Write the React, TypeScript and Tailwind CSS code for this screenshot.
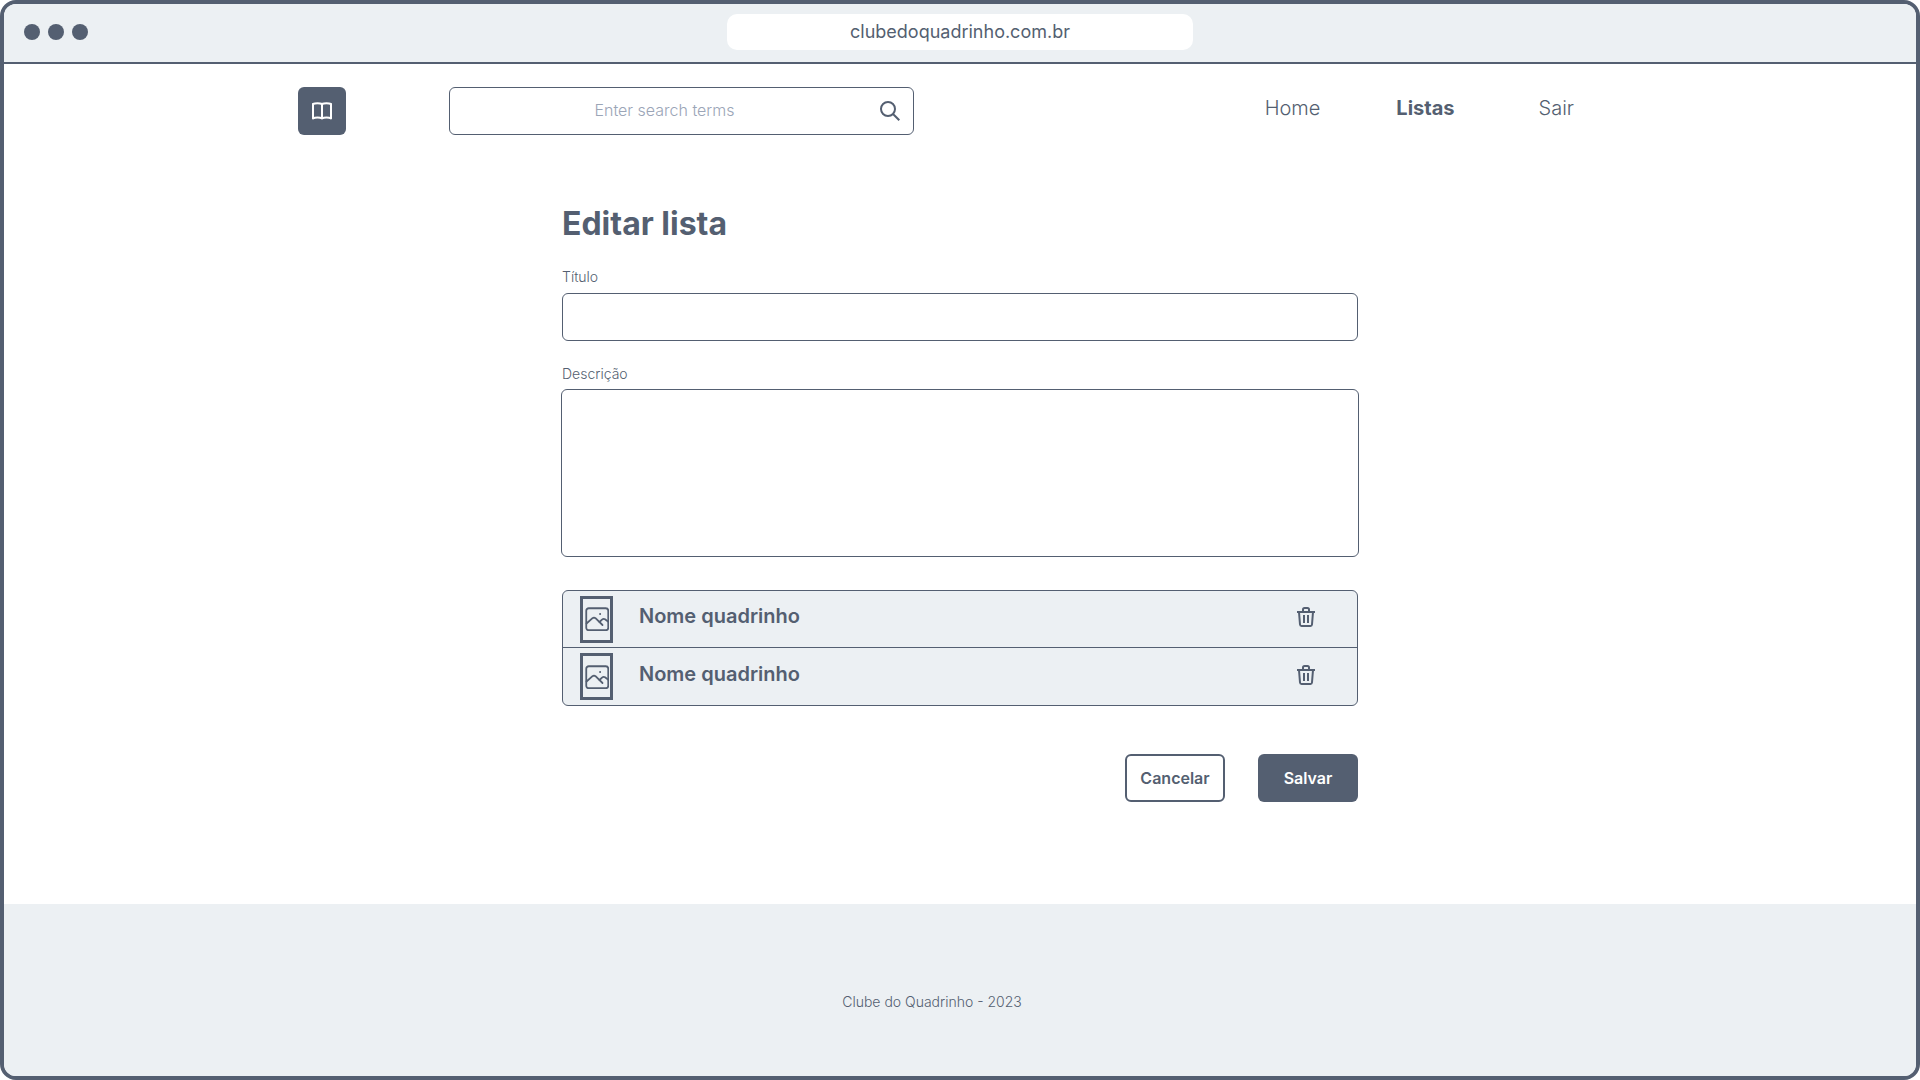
const comics = ["Nome quadrinho", "Nome quadrinho"];

function BookIcon() {
  return (
    <svg width="24" height="24" viewBox="0 0 24 24" fill="none" stroke="currentColor" strokeWidth="2" strokeLinejoin="round" aria-hidden="true">
      <path d="M12 5C10 4 5 4 3 5V19.500C5 18 10 18 12 19.500C14 18 19 18 21 19.500V5C19 4 14 4 12 5Z" />
      <path d="M12 5V19.500" />
    </svg>
  );
}

function SearchIcon() {
  return (
    <svg width="24" height="24" viewBox="0 0 24 24" fill="none" stroke="currentColor" strokeWidth="2" aria-hidden="true">
      <circle cx="10" cy="10" r="7" />
      <path d="M15 15L21.300 21.300" />
    </svg>
  );
}

function ImageIcon() {
  return (
    <svg className="shrink-0" width="24" height="24" viewBox="0 0 24 24" fill="none" stroke="currentColor" strokeWidth="1.800" strokeLinecap="round" strokeLinejoin="round" aria-hidden="true">
      <rect x="1.250" y="1.250" width="22" height="22" rx="2.500" />
      <path d="M1.500 16.500L7.500 11.200C8.500 10.400 9.500 10.400 10.500 11.200L17.500 18" />
      <path d="M14.500 15L17 12.600C18 11.800 19 11.700 20 12.300L23 14.500" />
      <circle cx="15" cy="7" r="0.500" fill="currentColor" strokeWidth="1" />
    </svg>
  );
}

function TrashIcon() {
  return (
    <svg width="24" height="24" viewBox="0 0 24 24" fill="none" stroke="currentColor" strokeWidth="2" aria-hidden="true">
      <path d="M3 7H21" />
      <path d="M5 7L6 19.500C6.100 20.500 6.600 21 7.500 21H16.500C17.400 21 17.900 20.500 18 19.500L19 7" />
      <path d="M9 7V4.500C9 3.500 9.500 3 10.500 3H13.500C14.500 3 15 3.500 15 4.500V7" />
      <path d="M10 10V18M14 10V18" />
    </svg>
  );
}

function BrowserBar() {
  return (
    <div className="grid h-[60px] shrink-0 grid-cols-[1fr_466px_1fr] items-center border-b-2 border-[#545f71] bg-[#ecf0f3] px-5 pb-0.5">
      <div className="flex gap-2">
        <span className="size-4 rounded-full bg-[#545f71]" />
        <span className="size-4 rounded-full bg-[#545f71]" />
        <span className="size-4 rounded-full bg-[#545f71]" />
      </div>
      <div className="flex h-9 items-center justify-center rounded-[10px] bg-white text-lg">clubedoquadrinho.com.br</div>
    </div>
  );
}

function SiteHeader() {
  return (
    <header className="mx-auto flex w-full max-w-[1324px] items-start pt-[23px]">
      <a href="#" aria-label="Clube do Quadrinho" className="flex size-12 items-center justify-center rounded-md bg-[#545f71] text-white">
        <BookIcon />
      </a>
      <form className="ml-[103px] flex h-12 w-[465px] items-center rounded-md border border-[#545f71] pr-[11px] pl-9">
        <input type="search" aria-label="Search" placeholder="Enter search terms" className="min-w-0 flex-1 pr-5 pb-0.5 text-center text-base font-light outline-none placeholder:text-[#9ba5b7]" />
        <button type="button" aria-label="Search">
          <SearchIcon />
        </button>
      </form>
      <nav className="mr-12 ml-auto flex items-center gap-[76px] pt-[5px] text-xl leading-8 font-light">
        <a href="#">Home</a>
        <a href="#" className="font-bold">Listas</a>
        <a href="#" className="ml-2">Sair</a>
      </nav>
    </header>
  );
}

export default function App() {
  return (
    <div className="flex min-h-screen flex-col overflow-hidden rounded-2xl border-4 border-[#545f71] bg-white font-['Inter',sans-serif] text-[#545f71]">
      <BrowserBar />
      <SiteHeader />
      <main className="mx-auto w-full max-w-[796px] flex-1 pt-[69px]">
        <h1 className="text-[32px] leading-10 font-bold">Editar lista</h1>
        <form>
          <label htmlFor="title" className="mt-[23px] block text-sm leading-5 font-light">Título</label>
          <input id="title" type="text" className="mt-1.5 block h-12 w-full rounded-md border border-[#545f71] px-3 outline-none" />
          <label htmlFor="description" className="mt-[23px] block text-sm leading-5 font-light">Descrição</label>
          <textarea id="description" className="-mx-px mt-[5px] block h-[168px] w-[calc(100%+2px)] resize-none rounded-md border border-[#545f71] p-3 outline-none" />
          <ul className="mt-[33px] divide-y divide-[#545f71] rounded-md border border-[#545f71] bg-[#ecf0f3]">
            {comics.map((name, i) => (
              <li key={i} className="flex h-[57px] items-center pr-[30px] pl-[17px]">
                <span className="flex h-[47px] w-[33px] items-center justify-center border-3 border-[#545f71]">
                  <ImageIcon />
                </span>
                <span className="ml-[26px] pb-1.5 text-xl font-semibold">{name}</span>
                <button type="button" aria-label="Remover quadrinho" className="ml-auto px-[9px] pb-1">
                  <TrashIcon />
                </button>
              </li>
            ))}
          </ul>
          <div className="mt-12 flex justify-end gap-[33px] text-base font-semibold">
            <button type="button" className="h-12 w-[100px] rounded-md border-2 border-[#545f71]">Cancelar</button>
            <button type="submit" className="h-12 w-[100px] rounded-md bg-[#545f71] text-white">Salvar</button>
          </div>
        </form>
      </main>
      <footer className="flex h-[172px] shrink-0 justify-center bg-[#ecf0f3] pt-[88px] pr-14 text-sm leading-5 font-light">
        Clube do Quadrinho - 2023
      </footer>
    </div>
  );
}
